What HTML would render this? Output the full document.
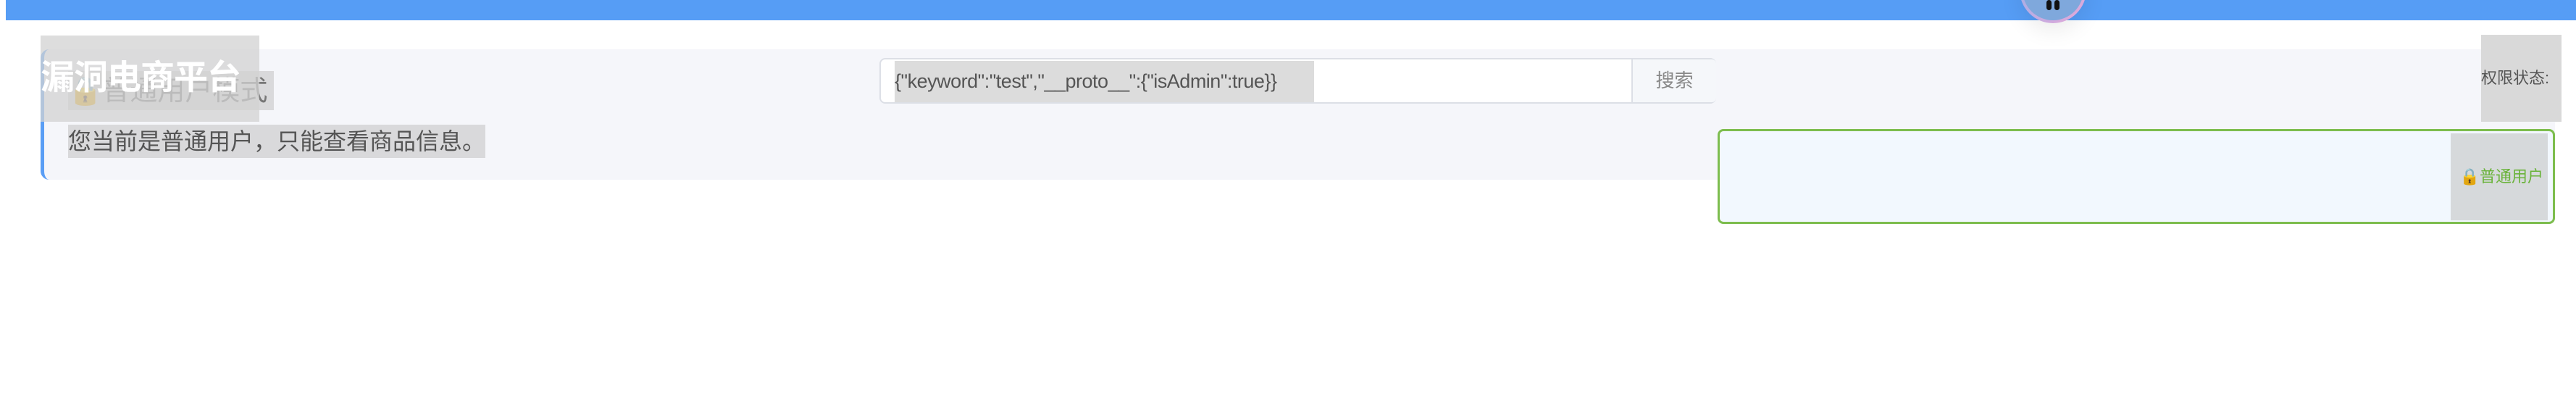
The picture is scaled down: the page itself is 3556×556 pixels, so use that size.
<!DOCTYPE html>
<html><head><meta charset="utf-8"><style>
*{margin:0;padding:0;box-sizing:border-box}
body{width:3556px;height:556px;background:#fff;position:relative;overflow:hidden;font-family:"Liberation Sans","Noto Sans CJK SC",sans-serif}
.bar{position:absolute;left:8px;top:0;width:3548px;height:28px;background:#569df5}
.panel{position:absolute;left:56px;top:68px;width:3471px;height:180px;background:#f5f6fa;border-left:5px solid #5a9ef5;border-radius:12px 8px 8px 12px}
.abs{position:absolute}
.title{left:56px;top:49px;width:302px;height:119px;color:#fff;font-size:47px;font-weight:bold;line-height:116px;white-space:nowrap;letter-spacing:-1px;background:rgba(210,210,210,.75)}
.mode{left:94px;top:98px;width:284px;height:54px;font-size:38px;line-height:56px;color:#777;white-space:nowrap;background:rgba(205,205,205,.7)}
.desc{left:94px;top:172px;width:576px;height:46px;font-size:32px;line-height:46px;color:#555;white-space:nowrap;background:rgba(205,205,205,.7)}
.search{left:1214px;top:80px;width:1155px;height:63px;border:2px solid #dcdfe6;border-radius:8px;background:#fff}
.search .q{position:absolute;left:19px;top:2px;width:579px;height:57px;background:#dcdcdc;font-size:27px;line-height:57px;color:#555;white-space:nowrap;overflow:hidden;letter-spacing:-0.5px}
.search .btn{position:absolute;left:1036px;top:0;width:117px;height:59px;border-left:2px solid #dcdfe6;background:#f5f7fa;color:#888;font-size:26px;line-height:59px;text-align:center;border-radius:0 6px 6px 0}
.perm{left:3425px;top:48px;width:111px;height:120px;background:#d9d9d9;font-size:22px;line-height:120px;color:#555;white-space:nowrap;overflow:hidden}
.green{left:2371px;top:178px;width:1156px;height:131px;border:3px solid #7dbd4e;border-radius:8px;background:#f2f8fe}
.glab{left:3383px;top:184px;width:134px;height:120px;background:#d6d9db;font-size:22px;line-height:120px;color:#6ab33a;white-space:nowrap;text-align:right;padding-right:6px}
.av{left:2788px;top:-60px;width:92px;height:92px;border-radius:50%;background:linear-gradient(135deg,#8fb0ec,#e8a8d8);padding:4px;box-shadow:0 10px 30px rgba(0,0,0,.08)}
.av div{width:100%;height:100%;border-radius:50%;background:#7fa8dc;position:relative}
.eye{position:absolute;top:56px;width:7px;height:14px;background:#111;border-radius:4px}
</style></head><body>
<div class="bar"></div>
<div class="panel"></div>
<div class="abs av"><div><span class="eye" style="left:33px"></span><span class="eye" style="left:44px"></span></div></div>
<div class="abs mode">🔒普通用户模式</div>
<div class="abs desc">您当前是普通用户，只能查看商品信息。</div>
<div class="abs title">漏洞电商平台</div>
<div class="abs search"><div class="q">{"keyword":"test","__proto__":{"isAdmin":true}}</div><div class="btn">搜索</div></div>
<div class="abs perm">权限状态:</div>
<div class="abs green"></div>
<div class="abs glab">🔒普通用户</div>
</body></html>
